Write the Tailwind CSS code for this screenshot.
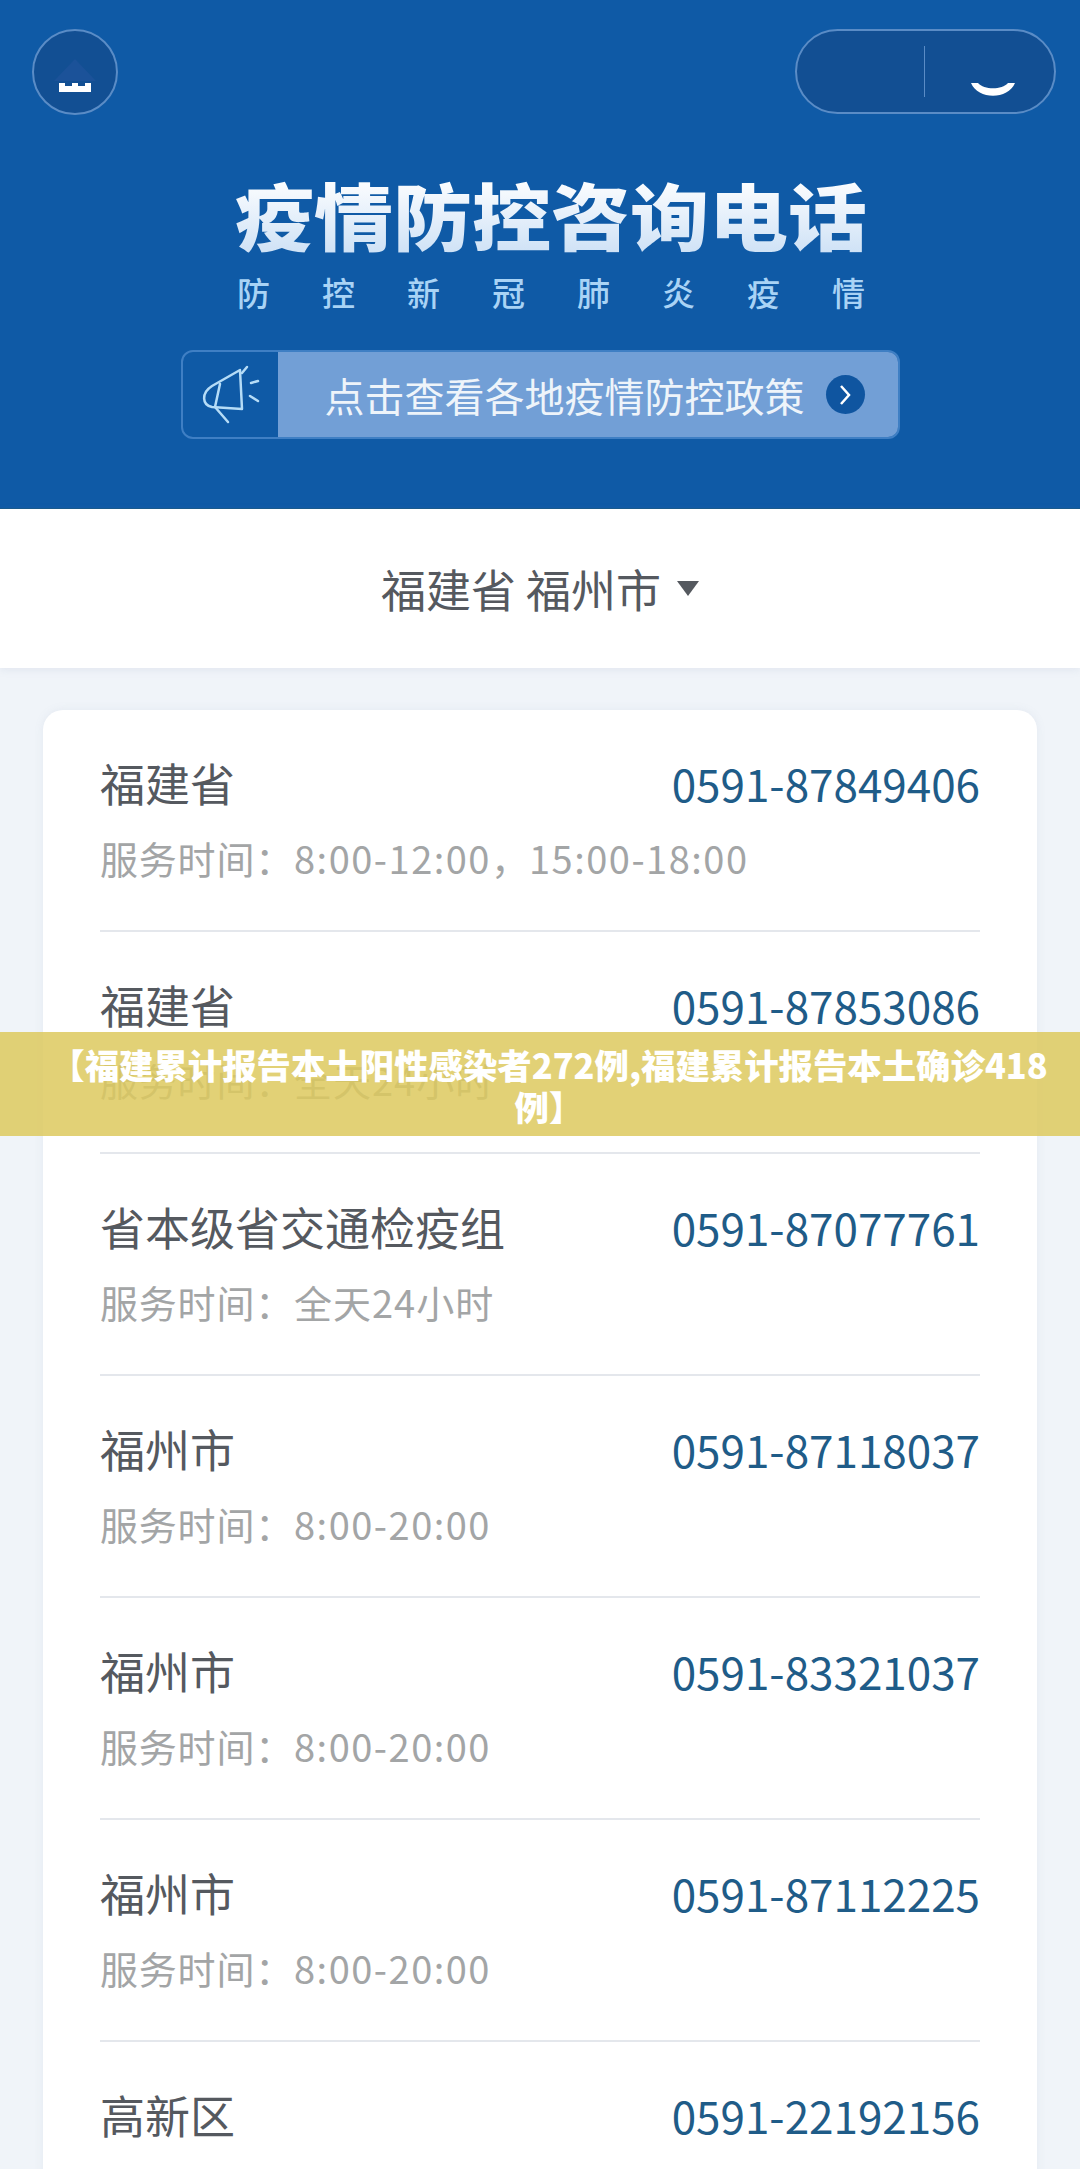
<!DOCTYPE html>
<html lang="zh">
<head>
<meta charset="utf-8">
<title>疫情防控咨询电话</title>
<script src="https://cdn.jsdelivr.net/npm/@tailwindcss/browser@4"></script>
</head>
<body class="font-['Noto_Sans_CJK_SC','Noto_Sans',sans-serif]">
<div class="relative w-[1080px] h-[2169px] overflow-hidden bg-[#f0f4f9]">

  <!-- blue header -->
  <header class="h-[509px] bg-[#0f5aa6] border-b border-[#17598c] flex flex-col items-center">
    <div class="w-full flex justify-between items-start pt-[29px] pl-[32px] pr-[24px]">
      <div class="relative w-[86px] h-[86px] rounded-full bg-[#124f93] border-2 border-[#5a8cc6]">
        <svg class="absolute left-0 top-0" width="82" height="82" viewBox="0 0 82 82">
          <path d="M41 28 L62 50 L20 50 Z" fill="#1b5299"/>
          <path d="M25 52h6v3h7v-3h6v3h7v-3h6v9H25z" fill="#fff"/>
        </svg>
      </div>
      <div class="relative w-[261px] h-[85px] rounded-full bg-[#124f93] border-2 border-[#5a8cc6] flex">
        <div class="w-[128px] h-[51px] mt-[15px] border-r border-[#5a8cc6]"></div>
        <svg class="absolute left-[173px] top-[51px]" width="46" height="16" viewBox="0 0 46 16">
          <path d="M1 1 C8 18 38 18 45 1 L38 1 C32 8 14 8 8 1 Z" fill="#fff"/>
        </svg>
      </div>
    </div>

    <h1 class="mt-[57px] ml-[22px] text-[79px] leading-[84px] font-black whitespace-nowrap scale-y-[0.92] bg-linear-to-b from-white to-[#cfe2f6] bg-clip-text text-transparent">疫情防控咨询电话</h1>
    <p class="mt-[15px] ml-[22px] w-[628px] flex justify-between text-[33px] leading-[42px] font-medium text-[#a9d3f5]">
      <span>防</span><span>控</span><span>新</span><span>冠</span><span>肺</span><span>炎</span><span>疫</span><span>情</span>
    </p>

    <div class="mt-[37px] w-[719px] h-[89px] flex rounded-[12px] border-2 border-[#3f7fc4] overflow-hidden">
      <div class="w-[95px] flex items-center justify-center">
        <svg width="64" height="66" viewBox="0 0 64 66" fill="none" stroke="#b5dcf7" stroke-width="2.5" stroke-linecap="round" stroke-linejoin="round">
          <path d="M42 8 L14 24 C3 31 4 43 14 45 L44 47 Z"/>
          <path d="M22 22 L17 45 L30 60"/>
          <path d="M49 5 L44 11"/>
          <path d="M60 19 L53 21"/>
          <path d="M52 34 L60 39"/>
        </svg>
      </div>
      <div class="flex-1 bg-[#729fd6] flex items-center pl-[47px]">
        <span class="text-[40px] leading-[48px] whitespace-nowrap text-[#eef4fa]">点击查看各地疫情防控政策</span>
        <span class="ml-[21px] w-[39px] h-[39px] rounded-full bg-[#0f55a0] flex items-center justify-center">
          <svg width="14" height="22" viewBox="0 0 14 22" fill="none" stroke="#fff" stroke-width="2.5"><path d="M3 2 L11 11 L3 20"/></svg>
        </span>
      </div>
    </div>
  </header>

  <!-- region picker -->
  <div class="h-[159px] bg-white shadow-[0_2px_8px_rgba(120,140,170,0.12)] flex items-center justify-center">
    <span class="text-[45px] leading-[56px] text-[#55595f] whitespace-nowrap">福建省 福州市</span>
    <span class="ml-[16px] w-0 h-0 border-x-[11px] border-x-transparent border-t-[15px] border-t-[#55595f]"></span>
  </div>

  <!-- phone list -->
  <main class="mt-[42px] mx-[43px] bg-white rounded-[20px] shadow-[0_0_10px_rgba(120,140,170,0.1)] px-[57px]">
    <section class="h-[222px] border-b-2 border-[#e4e7ec] pt-[43px]">
      <div class="flex justify-between items-center h-[60px]"><span class="text-[45px] text-[#55595f]">福建省</span><span class="text-[44px] text-[#1f5c88]">0591-87849406</span></div>
      <p class="mt-[20px] text-[38px] leading-[50px] text-[#a3a5a6]"><span class="tracking-[0.8px]">服务时间：</span><span class="tracking-[1.5px]">8:00-12:00</span>，<span class="tracking-[1.5px]">15:00-18:00</span></p>
    </section>
    <section class="h-[222px] border-b-2 border-[#e4e7ec] pt-[43px]">
      <div class="flex justify-between items-center h-[60px]"><span class="text-[45px] text-[#55595f]">福建省</span><span class="text-[44px] text-[#1f5c88]">0591-87853086</span></div>
      <p class="mt-[20px] text-[38px] leading-[50px] text-[#a3a5a6]"><span class="tracking-[0.8px]">服务时间：</span><span class="tracking-[1px]">全天24小时</span></p>
    </section>
    <section class="h-[222px] border-b-2 border-[#e4e7ec] pt-[43px]">
      <div class="flex justify-between items-center h-[60px]"><span class="text-[45px] text-[#55595f]">省本级省交通检疫组</span><span class="text-[44px] text-[#1f5c88]">0591-87077761</span></div>
      <p class="mt-[20px] text-[38px] leading-[50px] text-[#a3a5a6]"><span class="tracking-[0.8px]">服务时间：</span><span class="tracking-[1px]">全天24小时</span></p>
    </section>
    <section class="h-[222px] border-b-2 border-[#e4e7ec] pt-[43px]">
      <div class="flex justify-between items-center h-[60px]"><span class="text-[45px] text-[#55595f]">福州市</span><span class="text-[44px] text-[#1f5c88]">0591-87118037</span></div>
      <p class="mt-[20px] text-[38px] leading-[50px] text-[#a3a5a6]"><span class="tracking-[0.8px]">服务时间：</span><span class="tracking-[1.5px]">8:00-20:00</span></p>
    </section>
    <section class="h-[222px] border-b-2 border-[#e4e7ec] pt-[43px]">
      <div class="flex justify-between items-center h-[60px]"><span class="text-[45px] text-[#55595f]">福州市</span><span class="text-[44px] text-[#1f5c88]">0591-83321037</span></div>
      <p class="mt-[20px] text-[38px] leading-[50px] text-[#a3a5a6]"><span class="tracking-[0.8px]">服务时间：</span><span class="tracking-[1.5px]">8:00-20:00</span></p>
    </section>
    <section class="h-[222px] border-b-2 border-[#e4e7ec] pt-[43px]">
      <div class="flex justify-between items-center h-[60px]"><span class="text-[45px] text-[#55595f]">福州市</span><span class="text-[44px] text-[#1f5c88]">0591-87112225</span></div>
      <p class="mt-[20px] text-[38px] leading-[50px] text-[#a3a5a6]"><span class="tracking-[0.8px]">服务时间：</span><span class="tracking-[1.5px]">8:00-20:00</span></p>
    </section>
    <section class="h-[222px] pt-[43px]">
      <div class="flex justify-between items-center h-[60px]"><span class="text-[45px] text-[#55595f]">高新区</span><span class="text-[44px] text-[#1f5c88]">0591-22192156</span></div>
    </section>
  </main>

  <!-- caption strip laid over the screenshot -->
  <div class="absolute left-0 right-0 top-[1032px] h-[104px] bg-[#ddc95e]/85 pl-[34px] pr-[16px] py-[11px] text-center text-[34.4px] leading-[42px] font-black text-white">【福建累计报告本土阳性感染者272例,福建累计报告本土确诊418例】</div>
</div>
</body>
</html>
